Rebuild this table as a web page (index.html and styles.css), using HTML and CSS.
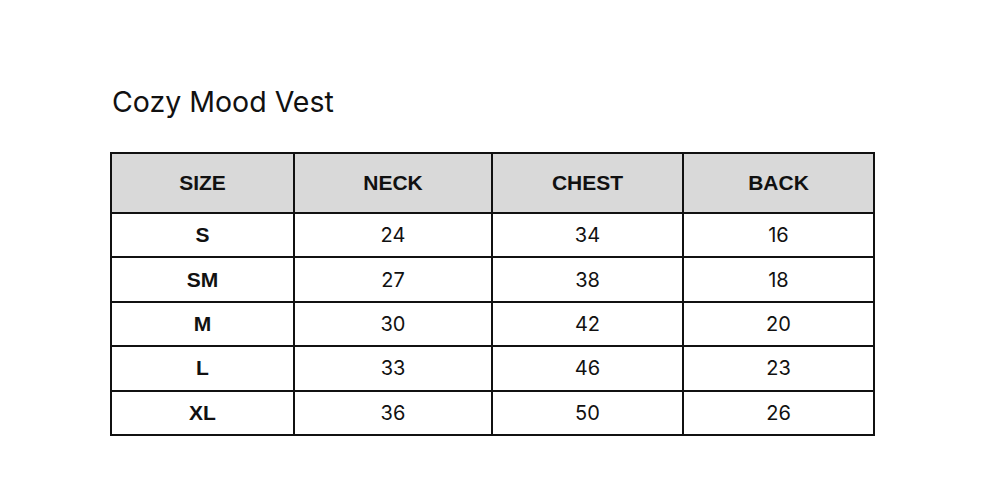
FILE: index.html
```html
<!DOCTYPE html>
<html>
<head>
<meta charset="utf-8">
<link rel="stylesheet" href="styles.css">
</head>
<body>
<main class="page">
  <h1 class="title">Cozy Mood Vest</h1>
  <table class="chart">
    <thead>
      <tr><th class="c1">SIZE</th><th class="c2">NECK</th><th class="c3">CHEST</th><th class="c4">BACK</th></tr>
    </thead>
    <tbody>
      <tr><th>S</th><td>24</td><td>34</td><td>16</td></tr>
      <tr><th>SM</th><td>27</td><td>38</td><td>18</td></tr>
      <tr><th>M</th><td>30</td><td>42</td><td>20</td></tr>
      <tr><th>L</th><td>33</td><td>46</td><td>23</td></tr>
      <tr><th>XL</th><td>36</td><td>50</td><td>26</td></tr>
    </tbody>
  </table>
</main>
</body>
</html>
```
FILE: styles.css
```css
html, body {
  margin: 0;
  padding: 0;
  background: #ffffff;
}
body {
  font-family: Inter, "Liberation Sans", sans-serif;
  color: #111111;
}
.page {
  padding: 83px 0 0 110px;
}
.title {
  margin: 0 0 0 2px;
  font-weight: 400;
  font-size: 28.5px;
  line-height: 38px;
  letter-spacing: 0;
  color: #111;
}
.chart {
  margin-top: 31px;
  border-collapse: collapse;
  border: 2px solid #111;
}
.chart th, .chart td {
  border: 2px solid #111;
  text-align: center;
  padding: 0;
}
.chart thead th {
  background: #d9d9d9;
  height: 58px;
  font-family: "Liberation Sans", Arial, sans-serif;
  font-weight: 700;
  font-size: 21px;
}
.chart tbody th {
  font-family: "Liberation Sans", Arial, sans-serif;
  font-weight: 700;
  font-size: 21px;
  height: 42.4px;
}
.chart tbody td {
  font-size: 20px;
  font-weight: 400;
  height: 42.4px;
}
.c1 { width: 181px; }
.c2 { width: 196px; }
.c3 { width: 189px; }
.c4 { width: 189px; }
```
